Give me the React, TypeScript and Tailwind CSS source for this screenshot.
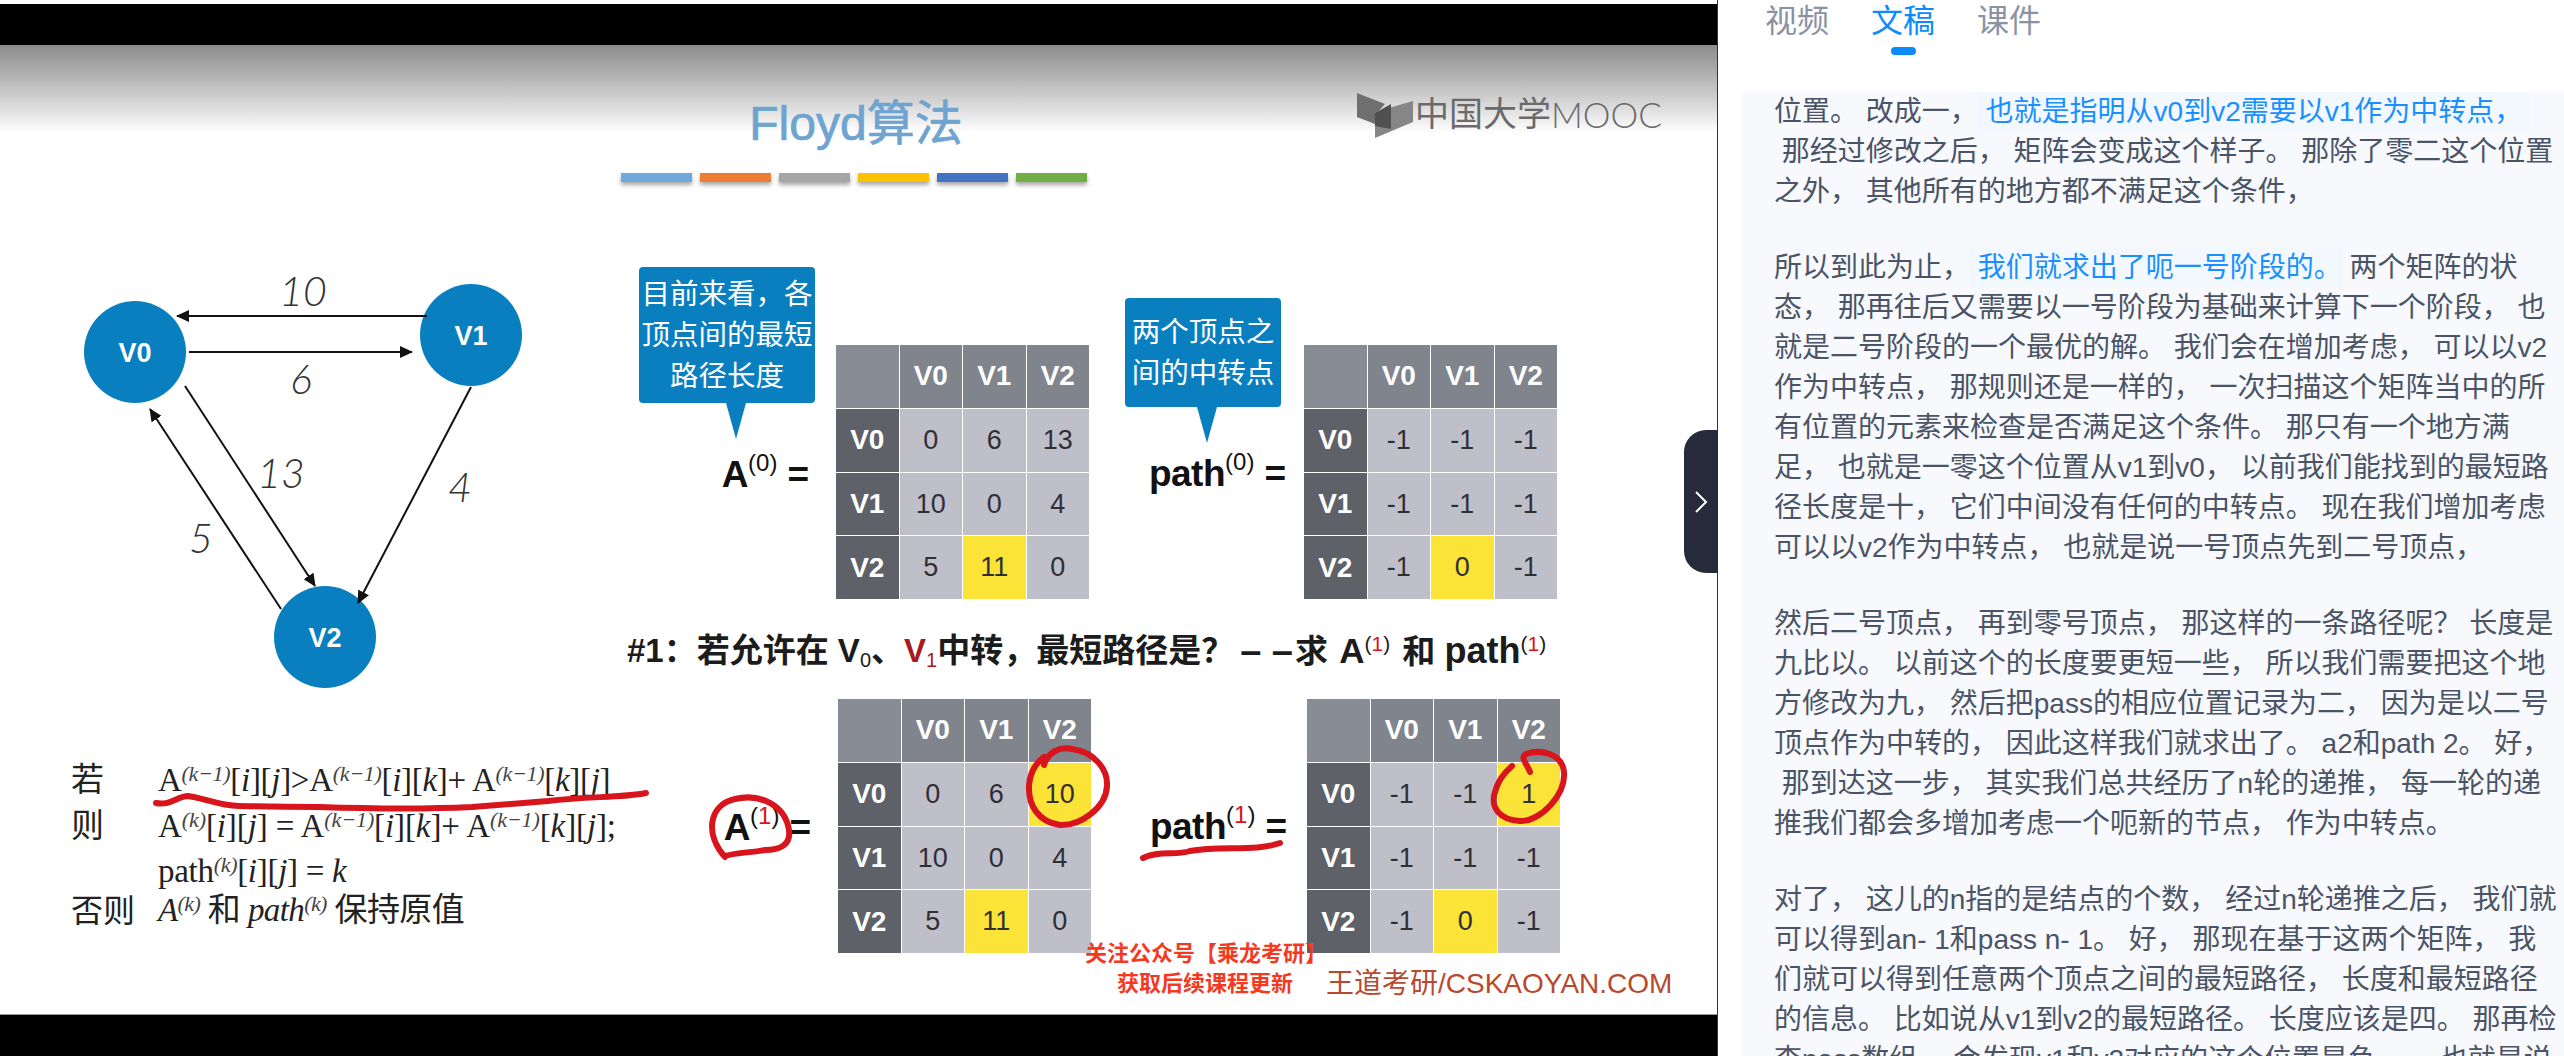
import React from 'react';

const cjkSans = { fontFamily: '"Liberation Sans", "Noto Sans CJK SC", sans-serif' };
const cjkSerif = { fontFamily: '"Liberation Serif", "Noto Sans CJK SC", serif' };

type Cell = { v: string; hot?: boolean };

const hot = (v: string): Cell => ({ v, hot: true });
const cell = (v: string): Cell => ({ v });

function Matrix({ rows }: { rows: Cell[][] }) {
  const heads = ['V0', 'V1', 'V2'];
  return (
    <div className="grid w-[253px] h-[254px] shrink-0 grid-cols-4 grid-rows-4 gap-px bg-white">
      <div className="bg-[#888c95]" />
      {heads.map((h) => (
        <div key={h} className="flex items-center justify-center bg-[#80848d] text-[28px] font-bold text-white">{h}</div>
      ))}
      {rows.map((r, i) => (
        <React.Fragment key={i}>
          <div className="flex items-center justify-center bg-[#5f6168] text-[28px] font-bold text-white">{heads[i]}</div>
          {r.map((c, j) => (
            <div key={j} className={`flex items-center justify-center text-[27px] text-[#2f2f35] ${c.hot ? 'bg-[#fce338]' : 'bg-[#bfbfca]'}`}>{c.v}</div>
          ))}
        </React.Fragment>
      ))}
    </div>
  );
}

function Label({ name, n, red }: { name: string; n: string; red?: boolean }) {
  return (
    <div className="flex items-start text-[37px] leading-[44px] text-[#111]">
      <span className="font-bold tracking-[-0.5px]">{name}</span>
      <span className="mt-[-4px] text-[24px] leading-[28px]">
        (<span className={red ? 'text-[#d8141c]' : ''}>{n}</span>)
      </span>
      <span className="ml-[10px] font-bold">=</span>
    </div>
  );
}

function Callout({ lines, className, tailClass }: { lines: string[]; className: string; tailClass: string }) {
  return (
    <div className={`absolute flex flex-col items-center justify-center rounded-[4px] bg-[#0a7fc0] text-[28.5px] leading-[41px] text-white ${className}`}>
      {lines.map((l) => (
        <span key={l} className="whitespace-nowrap">{l}</span>
      ))}
      <svg className={`absolute top-full ${tailClass}`} width="20" height="36" viewBox="0 0 20 36">
        <polygon points="0,0 20,0 10,36" fill="#0a7fc0" />
      </svg>
    </div>
  );
}

function Sup({ children }: { children: React.ReactNode }) {
  return <span className="relative top-[-10px] text-[22px] italic text-[#444]">({children})</span>;
}

function I({ children }: { children: React.ReactNode }) {
  return <span className="italic">{children}</span>;
}

function Graph() {
  const nodes = [
    { x: 135, y: 352, t: 'V0' },
    { x: 471, y: 335, t: 'V1' },
    { x: 325, y: 637, t: 'V2' },
  ];
  const edges = [
    [427, 316, 177, 316],
    [189, 352, 412, 352],
    [185, 386, 315, 586],
    [471, 387, 358, 603],
    [281, 609, 150, 409],
  ];
  const weights = [
    { x: 303, y: 306, t: '10' },
    { x: 301, y: 394, t: '6' },
    { x: 281, y: 488, t: '13' },
    { x: 460, y: 502, t: '4' },
    { x: 201, y: 553, t: '5' },
  ];
  return (
    <svg width="620" height="440" viewBox="0 260 620 440" className="block">
      <defs>
        <marker id="head" markerUnits="userSpaceOnUse" markerWidth="14" markerHeight="12" refX="12" refY="6" orient="auto">
          <path d="M0 0 L13 6 L0 12 Z" fill="#111" />
        </marker>
      </defs>
      {nodes.map((n) => (
        <g key={n.t}>
          <circle cx={n.x} cy={n.y} r="51" fill="#0a7fc0" />
          <text x={n.x} y={n.y + 10} textAnchor="middle" fill="#fff" fontSize="27" fontWeight="700" fontFamily='"Liberation Sans", sans-serif'>{n.t}</text>
        </g>
      ))}
      {edges.map((e, i) => (
        <line key={i} x1={e[0]} y1={e[1]} x2={e[2]} y2={e[3]} stroke="#111" strokeWidth="2" markerEnd="url(#head)" />
      ))}
      {weights.map((w) => (
        <text key={w.t} x={w.x} y={w.y} textAnchor="middle" fill="#333" fontSize="41" fontStyle="italic" fontFamily='"Lato", "Liberation Sans", sans-serif' fontWeight="300">{w.t}</text>
      ))}
    </svg>
  );
}

function Formula() {
  return (
    <div className="pl-[71px] pt-[58px] text-[33px] text-[#222] whitespace-nowrap" style={cjkSerif}>
      <div className="flex h-[46px] items-center">
        <span className="w-[87px]">若</span>
        <span className="tracking-[-0.3px]">A<Sup>k−1</Sup>[<I>i</I>][<I>j</I>]&gt;A<Sup>k−1</Sup>[<I>i</I>][<I>k</I>]+ A<Sup>k−1</Sup>[<I>k</I>][<I>j</I>]</span>
      </div>
      <div className="flex h-[46px] items-center">
        <span className="w-[87px]">则</span>
        <span className="tracking-[-0.1px]">A<Sup>k</Sup>[<I>i</I>][<I>j</I>] = A<Sup>k−1</Sup>[<I>i</I>][<I>k</I>]+ A<Sup>k−1</Sup>[<I>k</I>][<I>j</I>];</span>
      </div>
      <div className="flex h-[44px] items-center">
        <span className="w-[87px]" />
        <span className="tracking-[-0.3px]">path<Sup>k</Sup>[<I>i</I>][<I>j</I>] = <I>k</I></span>
      </div>
      <div className="flex h-[32px] items-center pt-[2px]">
        <span className="w-[87px] text-[32px]">否则</span>
        <span className="tracking-[-0.6px]"><I>A</I><Sup>k</Sup> 和 <I>path</I><Sup>k</Sup> 保持原值</span>
      </div>
    </div>
  );
}

function MoocLogo() {
  return (
    <div className="flex items-center text-[#6a6a6a]">
      <svg width="56" height="46" viewBox="0 0 56 46" className="mr-[2px] mt-[4px]">
        <polygon points="0,0 28,11 18,22 18,31 0,24" fill="#6f6f6f" />
        <polygon points="18,19 56,8 56,29 18,45" fill="#868686" />
        <polygon points="18,20 34,11 34,36 18,33" fill="#505050" />
      </svg>
      <span className="text-[34px] leading-none">中国大学</span>
      <span className="text-[35px] leading-none font-light" style={{ fontFamily: 'Lato, sans-serif' }}>MOOC</span>
    </div>
  );
}

function Slide() {
  const barColors = ['bg-[#6fa8dc]', 'bg-[#ed7d31]', 'bg-[#a5a5a5]', 'bg-[#ffc000]', 'bg-[#4472c4]', 'bg-[#70ad47]'];
  return (
    <div className="relative flex flex-1 bg-white" style={cjkSans}>
      <div className="absolute inset-x-0 top-0 h-[88px] bg-gradient-to-b from-[#8c8c8c] to-white" />
      <div className="relative w-[620px] shrink-0 pt-[215px]">
        <Graph />
        <Formula />
      </div>
      <div className="relative flex-1">
        <div className="flex items-start pt-[44px]">
          <div className="w-[472px] pt-[6px] text-center text-[48px] leading-[57px] text-[#6fa3d0] [-webkit-text-stroke:0.7px_#6fa3d0]">Floyd算法</div>
          <div className="ml-[265px]"><MoocLogo /></div>
        </div>
        <div className="mt-[21px] flex h-[9px] gap-[8px] pl-[1px]">
          {barColors.map((c) => (
            <div key={c} className={`h-[9px] w-[71px] shadow-[0_3px_4px_rgba(0,0,0,0.35)] ${c}`} />
          ))}
        </div>

        <div className="relative mt-[163px] flex">
          <Callout lines={['目前来看，各', '顶点间的最短', '路径长度']} className="left-[19px] top-[-78px] h-[136px] w-[176px]" tailClass="left-[87px]" />
          <Callout lines={['两个顶点之', '间的中转点']} className="left-[505px] top-[-47px] h-[109px] w-[156px]" tailClass="left-[72px]" />
          <div className="flex w-[216px] items-center justify-end pr-[27px] pt-[6px]"><Label name="A" n="0" /></div>
          <Matrix rows={[[cell('0'), cell('6'), cell('13')], [cell('10'), cell('0'), cell('4')], [cell('5'), hot('11'), cell('0')]]} />
          <div className="flex w-[215px] items-center justify-end pr-[18px] pt-[4px]"><Label name="path" n="0" /></div>
          <Matrix rows={[[cell('-1'), cell('-1'), cell('-1')], [cell('-1'), cell('-1'), cell('-1')], [cell('-1'), hot('0'), cell('-1')]]} />
        </div>

        <div className="ml-[7px] mt-[32px] flex h-[40px] items-center whitespace-nowrap text-[33px] font-bold text-[#1c1c1c]">
          <span>#1：若允许在 V<sub className="text-[20px] font-normal">0</sub>、<span className="text-[#a81a1f]">V<sub className="text-[20px] font-normal">1</sub></span>中转，最短路径是？</span>
          <span className="ml-[6px] text-[38px]">– –</span>
          <span className="ml-[2px]">求 <span className="ml-[2px] text-[35px]">A</span></span>
          <span className="mt-[-14px] text-[21px] font-normal">(<span className="text-[#d8141c]">1</span>)</span>
          <span className="ml-[3px]">&nbsp;和&nbsp;<span className="text-[36px]">path</span></span>
          <span className="mt-[-14px] text-[21px] font-normal">(<span className="text-[#d8141c]">1</span>)</span>
        </div>

        <div className="mt-[28px] flex">
          <div className="flex w-[218px] items-center justify-end pr-[27px] pt-[4px]"><Label name="A" n="1" red /></div>
          <Matrix rows={[[cell('0'), cell('6'), hot('10')], [cell('10'), cell('0'), cell('4')], [cell('5'), hot('11'), cell('0')]]} />
          <div className="flex w-[216px] items-center justify-end pr-[20px] pt-[2px]"><Label name="path" n="1" red /></div>
          <Matrix rows={[[cell('-1'), cell('-1'), hot('1')], [cell('-1'), cell('-1'), cell('-1')], [cell('-1'), hot('0'), cell('-1')]]} />
        </div>
      </div>

      {/* hand-drawn annotations, page coordinates */}
      <svg className="absolute inset-0 pointer-events-none" width="1718" height="969" viewBox="0 45 1718 969" fill="none" stroke="#d8141c" strokeWidth="6" strokeLinecap="round">
        <path d="M156 803 C170 806 178 796 188 796 C200 797 220 806 239 806 C280 807 300 807 319 807 C380 809 430 809 472 807 C500 805 525 803 548 801 C590 796 620 798 646 793" />
        <path d="M725 857 C705 835 708 805 735 799 C760 793 785 805 789 830 C791 845 780 850 765 850 C750 853 738 852 725 856" />
        <path d="M1143 858 C1160 850 1175 856 1190 851 C1220 845 1255 852 1280 843" />
        <path d="M1044 765 C1048 752 1060 746 1072 749 C1095 752 1108 770 1107 786 C1106 808 1080 826 1060 825 C1038 822 1028 805 1029 785 C1030 772 1036 763 1044 757" />
        <path d="M1530 772 C1526 762 1520 758 1526 754 C1540 749 1562 753 1564 772 C1566 795 1540 822 1520 821 C1500 820 1490 808 1495 792 C1498 780 1505 772 1512 766" />
      </svg>

      {/* watermark over the frame */}
      <div className="absolute left-[1085px] top-[896px] whitespace-nowrap text-[22px] font-bold leading-[26px] text-[#f4391f]">关注公众号【乘龙考研】</div>
      <div className="absolute left-[1117px] top-[926px] flex items-center whitespace-nowrap leading-[26px]">
        <span className="text-[22px] font-bold text-[#f4391f]">获取后续课程更新</span>
        <span className="ml-[33px] text-[28px] text-[#b9492e]">王道考研/CSKAOYAN.COM</span>
      </div>
    </div>
  );
}

type Line = { t: string; blue?: string; after?: string };

const paragraphs: Line[][] = [
  [
    { t: '位置。 改成一，', blue: ' 也就是指明从v0到v2需要以v1作为中转点， ' },
    { t: ' 那经过修改之后， 矩阵会变成这个样子。 那除了零二这个位置' },
    { t: '之外， 其他所有的地方都不满足这个条件，' },
  ],
  [
    { t: '所以到此为止，', blue: ' 我们就求出了呃一号阶段的。', after: ' 两个矩阵的状' },
    { t: '态， 那再往后又需要以一号阶段为基础来计算下一个阶段， 也' },
    { t: '就是二号阶段的一个最优的解。 我们会在增加考虑， 可以以v2' },
    { t: '作为中转点， 那规则还是一样的， 一次扫描这个矩阵当中的所' },
    { t: '有位置的元素来检查是否满足这个条件。 那只有一个地方满' },
    { t: '足， 也就是一零这个位置从v1到v0， 以前我们能找到的最短路' },
    { t: '径长度是十， 它们中间没有任何的中转点。 现在我们增加考虑' },
    { t: '可以以v2作为中转点， 也就是说一号顶点先到二号顶点，' },
  ],
  [
    { t: '然后二号顶点， 再到零号顶点， 那这样的一条路径呢？ 长度是' },
    { t: '九比以。 以前这个的长度要更短一些， 所以我们需要把这个地' },
    { t: '方修改为九， 然后把pass的相应位置记录为二， 因为是以二号' },
    { t: '顶点作为中转的， 因此这样我们就求出了。 a2和path 2。 好，' },
    { t: ' 那到达这一步， 其实我们总共经历了n轮的递推， 每一轮的递' },
    { t: '推我们都会多增加考虑一个呃新的节点， 作为中转点。' },
  ],
  [
    { t: '对了， 这儿的n指的是结点的个数， 经过n轮递推之后， 我们就' },
    { t: '可以得到an- 1和pass n- 1。 好， 那现在基于这两个矩阵， 我' },
    { t: '们就可以得到任意两个顶点之间的最短路径， 长度和最短路径' },
    { t: '的信息。 比如说从v1到v2的最短路径。 长度应该是四。 那再检' },
    { t: '查pass数组， 会发现v1和v2对应的这个位置是负一， 也就是说' },
  ],
];

function Transcript() {
  return (
    <div className="ml-[24px] flex-1 overflow-hidden bg-[#f7f9fd] pl-[32px] text-[28px] leading-[40px] text-[#4a5466]">
      {paragraphs.map((p, i) => (
        <div key={i} className="mb-[36px]">
          {p.map((l, j) => (
            <div key={j} className="h-[40px] whitespace-pre">
              {l.t}
              {l.blue && <span className="inline-block bg-[#f2f8fe] text-[#1a90ff]">{l.blue}</span>}
              {l.after}
            </div>
          ))}
        </div>
      ))}
    </div>
  );
}

export default function App() {
  return (
    <div className="flex h-[1056px] w-[2564px] overflow-hidden bg-white" style={cjkSans}>
      <div className="relative flex w-[1718px] shrink-0 flex-col border-r border-[#333]">
        <div className="mt-[4px] h-[41px] bg-black" />
        <Slide />
        <div className="h-[42px] border-t border-[#999] bg-black" />
        <div className="absolute left-[1684px] top-[430px] flex h-[143px] w-[34px] items-center justify-center rounded-l-[22px] bg-[#252b3a]">
          <svg width="14" height="24" viewBox="0 0 14 24" fill="none" stroke="#fff" strokeWidth="2">
            <polyline points="2,2 12,12 2,22" />
          </svg>
        </div>
      </div>

      <div className="flex flex-1 flex-col">
        <div className="flex h-[92px] shrink-0 gap-[42px] pl-[47px] pt-[1px] text-[32px] leading-[40px] text-[#8a92a3]">
          <span>视频</span>
          <div className="flex flex-col items-center text-[#0a8cff]">
            <span>文稿</span>
            <div className="mt-[6px] h-[8px] w-[25px] rounded-full bg-[#0a8cff]" />
          </div>
          <span>课件</span>
        </div>
        <Transcript />
      </div>
    </div>
  );
}
